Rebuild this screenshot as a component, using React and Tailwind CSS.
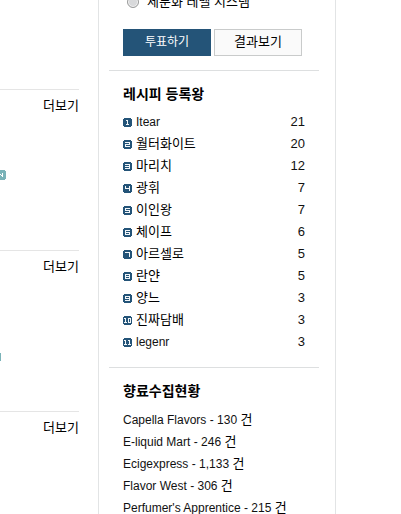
import React from "react";

const GLYPHS = {
  "0": ["111", "101", "101", "101", "111"],
  "1": ["110", "010", "010", "010", "111"],
  "2": ["11111", "00001", "11111", "10000", "11111"],
  "3": ["11111", "00001", "11111", "00001", "11111"],
  "4": ["10001", "10001", "11111", "00001", "00001"],
  "5": ["11111", "10000", "11111", "00001", "11111"],
  "6": ["11111", "10000", "11111", "10001", "11111"],
  "7": ["11111", "00001", "00001", "00001", "00001"],
  "8": ["11111", "10001", "11111", "10001", "11111"],
  "9": ["11111", "10001", "11111", "00001", "11111"],
};

function RankIcon({ rank }) {
  const digits = String(rank).split("");
  const total = digits.reduce((w, d) => w + GLYPHS[d][0].length, 0) + digits.length - 1;
  let x = Math.floor((9 - total) / 2);
  const dots = [];
  digits.forEach((d, n) => {
    GLYPHS[d].forEach((row, r) => {
      row.split("").forEach((bit, c) => {
        if (bit === "1") {
          dots.push(<rect key={`${n}-${r}-${c}`} x={x + c} y={2 + r} width="1" height="1" fill="#f1f6f9" />);
        }
      });
    });
    x += GLYPHS[d][0].length + 1;
  });
  return (
    <svg className="h-[9px] w-[9px] shrink-0" viewBox="0 0 9 9" shapeRendering="crispEdges" aria-hidden="true">
      <path d="M1 0h7v1h1v7h-1v1h-7v-1h-1v-7h1z" fill="#245478" />
      {dots}
    </svg>
  );
}

const members = [
  ["Itear", 21],
  ["월터화이트", 20],
  ["마리치", 12],
  ["광휘", 7],
  ["이인왕", 7],
  ["체이프", 6],
  ["아르셀로", 5],
  ["란얀", 5],
  ["양느", 3],
  ["진짜담배", 3],
  ["legenr", 3],
];

const brands = [
  ["Capella Flavors", "130"],
  ["E-liquid Mart", "246"],
  ["Ecigexpress", "1,133"],
  ["Flavor West", "306"],
  ["Perfumer's Apprentice", "215"],
];

function MoreSection({ children }) {
  return (
    <section className="h-[161px] border-t border-[#e5e5e5]">
      <div className="flex h-8 items-center justify-end">
        <a href="#more" className="text-black">더보기</a>
      </div>
      {children}
    </section>
  );
}

export default function App() {
  return (
    <div className="flex h-screen overflow-hidden bg-white pr-[65px] font-['Liberation_Sans','Noto_Sans_CJK_KR',sans-serif] text-[13px] leading-[22px] text-[#111]">
      <main className="min-w-0 flex-1 pt-[89px] pr-[19px]">
        <MoreSection>
          <svg className="mt-12 h-[10px] w-[6px]" viewBox="0 0 6 10" shapeRendering="crispEdges" aria-hidden="true">
            <path d="M0 0h5v1h1v8h-1v1h-5z" fill="#7ab3b8" />
            <path d="M0 4h1v1h1v-2h1v4h-1v-1h-1v-1h-1z" fill="#fff" />
          </svg>
        </MoreSection>
        <MoreSection>
          <div className="mt-[70px] h-2 w-px bg-[#7ab3b8]" />
        </MoreSection>
        <MoreSection />
      </main>

      <aside className="w-[238px] shrink-0 border-x border-[#e2e4e5] pr-4 pl-[10px]">
        <form className="-mt-[9px] border-b border-[#dddfe0] px-[14px] pb-[14px]">
          <label className="flex items-center gap-2 text-black">
            <input
              type="radio"
              name="poll"
              className="ml-1 h-3 w-3 appearance-none rounded-full border border-[#9a9b9b] bg-[#d8d9db] shadow-[inset_0_0_0_1px_#f4f4f4]"
            />
            세분화 레벨 시스템
          </label>
          <div className="mt-4 flex gap-[3px]">
            <button type="button" className="h-[27px] w-[88px] bg-[#245478] pb-[2px] text-[12px] text-white">
              투표하기
            </button>
            <button type="button" className="h-[27px] w-[88px] border border-[#c9cbcb] bg-[#fafafa] pb-[2px] text-black">
              결과보기
            </button>
          </div>
        </form>

        <section className="border-b border-[#dddfe0] px-[14px] pt-3 pb-[14px]">
          <h2 className="mb-[6px] text-[14px] font-bold text-black">레시피 등록왕</h2>
          <ol>
            {members.map(([name, count], i) => (
              <li key={name} className="flex h-[22px] items-center gap-1">
                <RankIcon rank={i + 1} />
                <a href="#member" className={/^[a-z]/i.test(name) ? "flex-1 text-[12px]" : "flex-1 text-black"}>
                  {name}
                </a>
                <span>{count}</span>
              </li>
            ))}
          </ol>
        </section>

        <section className="px-[14px] pt-3">
          <h2 className="mb-[7px] text-[14px] font-bold text-black">향료수집현황</h2>
          <ul className="text-[12px]">
            {brands.map(([name, count]) => (
              <li key={name} className="h-[22px] whitespace-nowrap">
                {name} - {count} <span className="text-[13px] text-black">건</span>
              </li>
            ))}
          </ul>
        </section>
      </aside>
    </div>
  );
}
